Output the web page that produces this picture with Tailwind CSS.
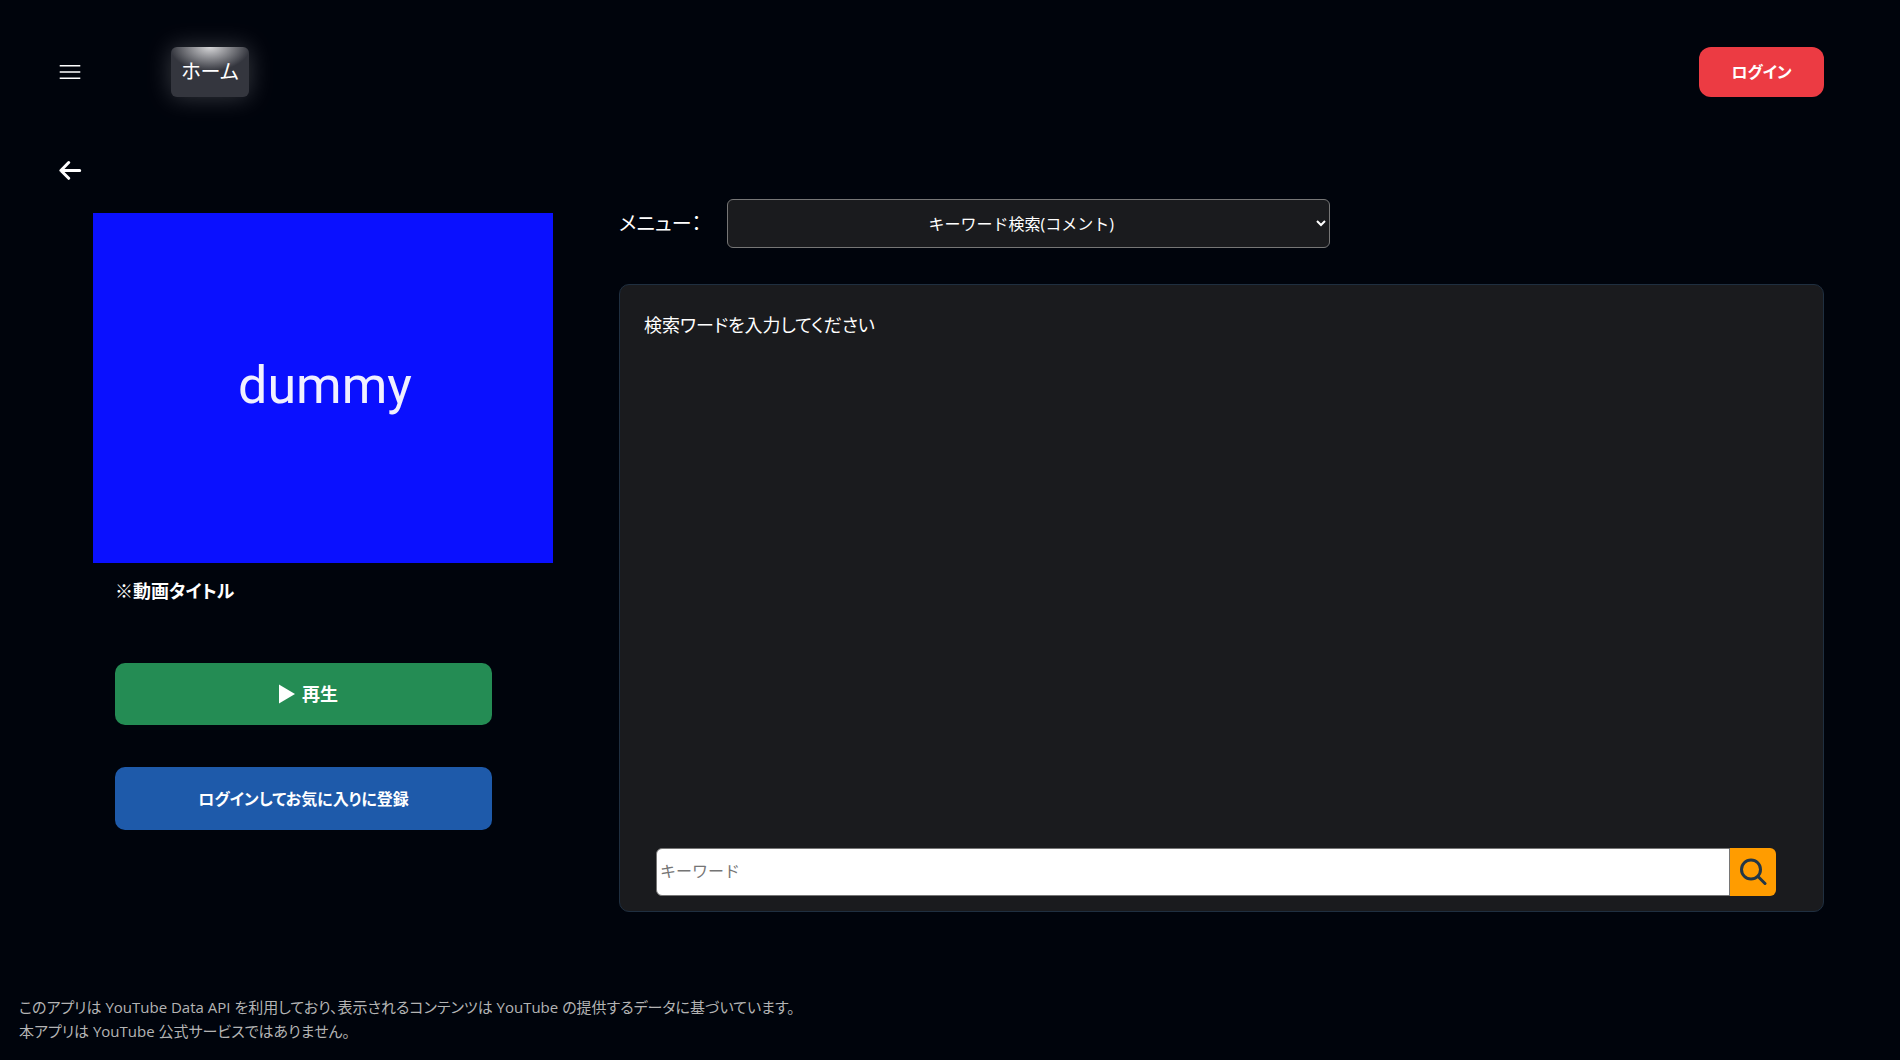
<!DOCTYPE html>
<html lang="ja">
<head>
<meta charset="utf-8">
<meta name="viewport" content="width=device-width, initial-scale=1">
<title>動画検索</title>
<script src="https://cdn.jsdelivr.net/npm/@tailwindcss/browser@4"></script>
</head>
<body class="flex min-h-screen flex-col bg-[#00040c] font-['Open_Sans','Noto_Sans_CJK_JP',sans-serif] text-white [font-feature-settings:'palt']">
  <header class="flex items-center pt-[47px] pr-[4%] pl-[59px]">
    <button type="button" aria-label="メニューを開く" class="mr-[88px]">
      <svg class="block h-6 w-6" viewBox="0 0 24 24" fill="none" stroke="currentColor" stroke-width="1.6"><path d="M.7 5.7h20.6M.7 12h20.6M.7 18.3h20.6"/></svg>
    </button>
    <nav>
      <a href="#" class="flex h-[50px] w-[78px] items-center justify-center rounded-md bg-[#34363e] bg-[radial-gradient(40px_24px_at_top,#d6d6d8,#34363e)] text-xl shadow-[0_0_24px_rgba(255,255,255,0.22)]">ホーム</a>
    </nav>
    <button type="button" class="ml-auto h-[50px] w-[125px] rounded-xl bg-[#ec3b43] text-base font-bold">ログイン</button>
  </header>

  <a href="#" aria-label="戻る" class="mt-[61px] ml-[59px] self-start">
    <svg class="block h-6 w-6" viewBox="0 0 24 24" fill="none" stroke="currentColor" stroke-width="3" stroke-linecap="round" stroke-linejoin="round"><path d="M9.7 4.5 1.9 12.5l7.8 7.8M2.2 12.5h18.5"/></svg>
  </a>

  <main class="-mt-px flex pr-[4%] pl-[93px]">
    <section class="mt-8 mr-[66px] w-[460px] shrink-0">
      <div class="flex h-[350px] items-center justify-center bg-[#0a10ff] pb-1 pl-1 font-[Roboto,sans-serif] text-[52px] leading-none text-[#f0f0ff]">dummy</div>
      <h1 class="mt-3 ml-[22px] text-lg leading-8 font-bold">※動画タイトル</h1>
      <div class="mt-14 ml-[22px] flex w-[377px] flex-col gap-[42px]">
        <button type="button" class="flex h-[62px] items-center justify-center gap-[7px] rounded-[10px] bg-[#248c54] pl-2.5 text-lg font-bold">
          <svg class="h-5 w-4" viewBox="0 0 16 20" fill="currentColor"><path d="M0 .5 16 10 0 19.5z"/></svg>再生
        </button>
        <button type="button" class="h-[63px] rounded-[10px] bg-[#1e5aaa] text-base font-bold">ログインしてお気に入りに登録</button>
      </div>
    </section>

    <section class="mt-[18px] min-w-0 flex-1">
      <div class="flex items-center">
        <label for="menu" class="w-[108px] text-xl">メニュー：</label>
        <select id="menu" class="h-[49px] w-1/2 rounded-md border border-[#767676] bg-[#1a1b1e] pr-0.5 text-center text-base [font-feature-settings:normal]">
          <option>キーワード検索(コメント)</option>
        </select>
      </div>
      <form class="mt-9 flex h-[628px] flex-col rounded-[10px] border border-[#1f2f40] bg-[#1a1b1e] pt-6 pr-[47px] pb-[15px] pl-6">
        <p class="text-lg leading-8">検索ワードを入力してください</p>
        <div class="mt-auto ml-3 flex h-12">
          <input type="text" aria-label="キーワード" placeholder="キーワード" class="min-w-0 flex-1 rounded-l-md border border-[#767676] bg-white px-[3px] pb-0.5 text-base text-black [font-feature-settings:normal] placeholder:text-[#757575]">
          <button type="submit" aria-label="検索" class="flex w-[46px] items-center justify-center rounded-r-md bg-[#ff9c00] text-[#233746]">
            <svg class="h-7 w-7" viewBox="0 0 28 28" fill="none" stroke="currentColor" stroke-width="3" stroke-linecap="round"><circle cx="12" cy="11.5" r="9.5"/><path d="m19 18.5 7 7"/></svg>
          </button>
        </div>
      </form>
    </section>
  </main>

  <footer class="mt-auto pb-[17px] pl-[19px] text-[15px] leading-6 text-[#b4b4b4]">
    <p>このアプリは YouTube Data API を利用しており、表示されるコンテンツは YouTube の提供するデータに基づいています。</p>
    <p>本アプリは YouTube 公式サービスではありません。</p>
  </footer>
</body>
</html>
